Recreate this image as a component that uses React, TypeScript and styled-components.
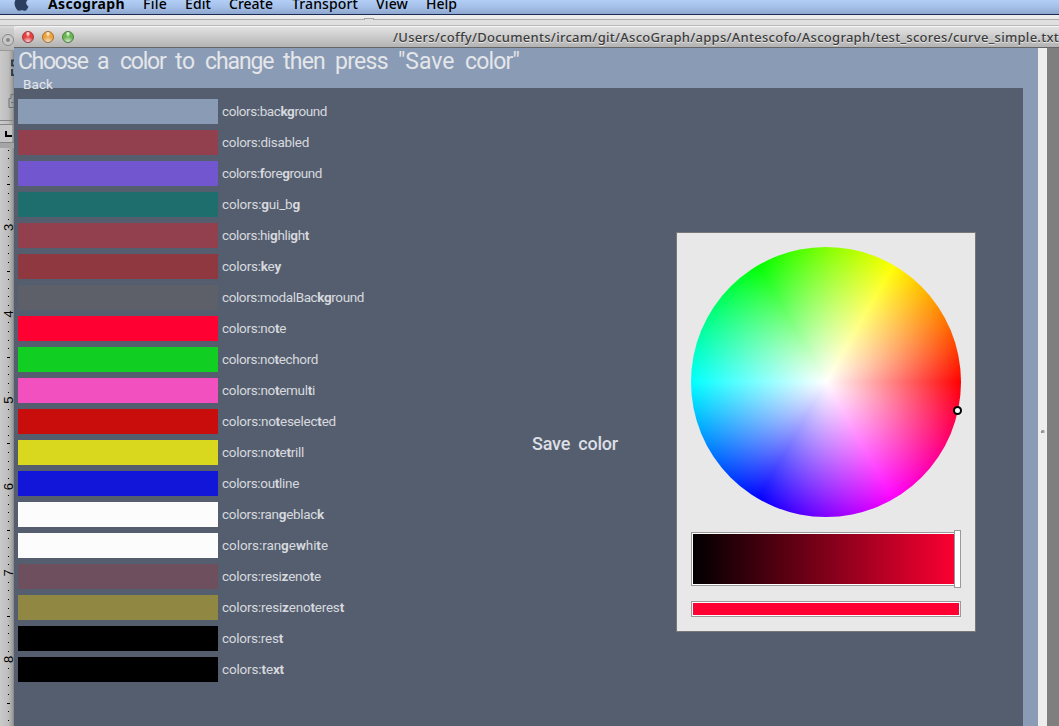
import React, { useLayoutEffect, useRef, useState } from "react";
import styled, { createGlobalStyle } from "styled-components";
import { FaApple } from "react-icons/fa";

const GlobalStyle = createGlobalStyle`
  * { box-sizing: border-box; }
  html, body { margin: 0; padding: 0; overflow: hidden; }
`;

const Desktop = styled.div`
  width: 1059px;
  height: 726px;
  overflow: hidden;
  display: flex;
  flex-direction: column;
  background: #e4e4e4;
  font-family: "Noto Sans", sans-serif;
`;

const MenuBar = styled.nav`
  flex: none;
  height: 15px;
  position: relative;
  display: flex;
  align-items: flex-start;
  padding-left: 13px;
  background: linear-gradient(#b4cff6, #a3bee7 55%, #8fa9d0 95%);
  border-bottom: 1px solid #1b2a55;
  color: #000;
  overflow: hidden;
`;

const AppleMark = styled(FaApple)`
  flex: none;
  width: 17px;
  height: 19px;
  margin-top: -7px;
  color: #2c3f60;
`;

const MenuItem = styled.div<{ $slot: number; $bold?: boolean }>`
  flex: none;
  width: ${(p) => p.$slot}px;
  margin-top: -6px;
  font-size: 14px;
  line-height: 20px;
  font-weight: ${(p) => (p.$bold ? 700 : 500)};
`;

const Backdrop = styled.div`
  flex: none;
  height: 11px;
  border-top: 3px solid #ececec;
  background: linear-gradient(#e9e6e9 0 1px, #b0adb0 1px 2px, #e0e0e0 2px 7px, #b8b8b8 7px);
  padding-left: 364px;
`;

const FolderEdge = styled.div`
  width: 10px;
  height: 2px;
  border: 1px solid #a4a4a4;
  border-bottom: 0;
  background: #ddd;
`;

const Main = styled.div`
  flex: 1;
  display: flex;
  min-height: 0;
`;

const RearWindow = styled.aside`
  flex: none;
  width: 14px;
  overflow: hidden;
  display: flex;
  flex-direction: column;
  background: linear-gradient(90deg, #cacaca, #bdbdbd 60%, #9b9b9b 92%, #7f7f7f);
`;

const RearTitle = styled.div`
  height: 25px;
  border-top: 2px solid #d8d8d8;
  border-bottom: 1px solid #999;
  background: linear-gradient(#cfcfcf, #b4b4b4);
`;

const Window = styled.section`
  flex: 1;
  display: flex;
  flex-direction: column;
  min-width: 0;
`;

const TitleBar = styled.header`
  flex: none;
  height: 22px;
  display: flex;
  align-items: center;
  padding-left: 8px;
  border-top: 1px solid #f6f6f6;
  border-bottom: 1px solid #666;
  border-top-left-radius: 5px;
  background: linear-gradient(#e2e2e2, #b3b3b3);
  color: #3c3c3c;
  white-space: nowrap;
`;

const Light = styled.i<{ $tone: string; $edge: string }>`
  flex: none;
  width: 12px;
  height: 12px;
  margin-right: 8px;
  border-radius: 50%;
  border: 1px solid ${(p) => p.$edge};
  background:
    radial-gradient(ellipse at 50% 15%, #ffffffcc 0 8%, transparent 32%),
    radial-gradient(circle at 50% 100%, #ffffff99, ${(p) => p.$tone} 50%);
`;

const WindowPath = styled.div`
  margin-left: 311px;
  font-size: 13px;
  line-height: 20px;
  font-weight: 500;
  text-shadow: 0 1px 0 #e8e8e8;
`;

const WindowBody = styled.div`
  flex: 1;
  display: flex;
  min-height: 0;
`;

const Canvas = styled.main`
  width: 1024px;
  display: flex;
  flex-direction: column;
  background: #8a9bb5;
  color: #e4e6ea;
  font-family: Roboto, sans-serif;
`;

const Heading = styled.div`
  flex: none;
  height: 40px;
  position: relative;
  z-index: 1;
  padding-left: 4px;
`;

const Prompt = styled.h1`
  display: flex;
  margin: 0;
  height: 28px;
  font-size: 23px;
  line-height: 28px;
  font-weight: 400;
  word-spacing: 5px;
`;

const BackButton = styled.div`
  padding-left: 5px;
  font-size: 13.5px;
  line-height: 16px;
  font-weight: 400;
`;

const Workspace = styled.div`
  flex: 1;
  width: 1009px;
  display: flex;
  background: #555e6f;
`;

const ColorList = styled.div`
  width: 518px;
  padding: 11px 0 0 4px;
  display: flex;
  flex-direction: column;
  gap: 6px;
`;

const ColorRow = styled.div`
  display: flex;
  align-items: center;
  gap: 4px;
  height: 25px;
`;

const Swatch = styled.div<{ $fill: string }>`
  width: 200px;
  height: 25px;
  background: ${(p) => p.$fill};
`;

const ColorName = styled.div`
  font-size: 13.5px;
  line-height: 25px;
  font-weight: 400;
  color: #d6d9de;
`;

const Heavy = styled.span`
  font-weight: 700;
`;

const SaveButton = styled.div`
  width: 144px;
  padding-top: 344px;
  font-size: 18px;
  line-height: 24px;
  font-weight: 500;
  color: #dcdfe4;
  word-spacing: 4px;
`;

const Picker = styled.div`
  width: 300px;
  height: 400px;
  margin-top: 144px;
  padding: 14px 14px 0;
  border: 1px solid #777;
  background: #e8e8e8;
`;

const Wheel = styled.div`
  position: relative;
  width: 270px;
  height: 270px;
  border-radius: 50%;
  background:
    radial-gradient(circle closest-side, #fff, #fff0),
    conic-gradient(from 90deg, #f00, #f0f, #00f, #0ff, #0f0, #ff0, #f00);
`;

const WheelMarker = styled.div`
  position: absolute;
  left: 262px;
  top: 159px;
  width: 9px;
  height: 9px;
  border: 2px solid #000;
  border-radius: 50%;
  background: #fff;
`;

const ValueTrack = styled.div`
  position: relative;
  height: 54px;
  margin-top: 15px;
  border: 1px solid #999;
  padding: 1px;
  background: linear-gradient(90deg, #000, #ff0033) content-box, #fff;
`;

const ValueHandle = styled.div`
  position: absolute;
  right: -1px;
  top: -3px;
  width: 7px;
  height: 58px;
  border: 1px solid #999;
  background: #fff;
`;

const Result = styled.div`
  height: 16px;
  margin-top: 15px;
  border: 1px solid #999;
  padding: 1px;
  background: linear-gradient(#ff0033, #ff0033) content-box, #fff;
`;

const ScrollGutter = styled.div`
  width: 9px;
  background: #ededed;
  display: flex;
  justify-content: center;
  padding-top: 382px;
`;

const Grip = styled.i`
  width: 4px;
  height: 3px;
  border-radius: 3px 3px 0 0;
  background: linear-gradient(120deg, #666, #ccc);
`;

const Outside = styled.div`
  flex: 1;
  background: #7f7f7f;
`;

const FitSpan = styled.span`
  display: inline-block;
  white-space: pre;
`;

/* Tracks its text so that it spans the given width. */
function Fit({ width, children }: { width: number; children: React.ReactNode }) {
  const ref = useRef<HTMLSpanElement>(null);
  const [tracking, setTracking] = useState(0);
  useLayoutEffect(() => {
    const el = ref.current;
    if (!el) return;
    const count = (el.textContent || "").length;
    setTracking((width - el.getBoundingClientRect().width) / count);
  }, [width]);
  return (
    <FitSpan ref={ref} style={{ letterSpacing: tracking }}>
      {children}
    </FitSpan>
  );
}

const menus = [
  { text: "Ascograph", width: 77, slot: 95, bold: true },
  { text: "File", width: 24, slot: 42 },
  { text: "Edit", width: 26, slot: 44 },
  { text: "Create", width: 44, slot: 63 },
  { text: "Transport", width: 66, slot: 84 },
  { text: "View", width: 32, slot: 50 },
  { text: "Help", width: 31, slot: 60 },
];

const promptWords: [string, number][] = [
  ["Choose ", 79],
  ["a ", 23],
  ["color ", 55],
  ["to ", 30],
  ["change ", 78],
  ["then ", 52],
  ["press ", 63],
  ['"Save ', 67],
  ['color"', 54],
];

const colors: [string, string, number][] = [
  ["background", "#8a9bb5", 105],
  ["disabled", "#923f4e", 87],
  ["foreground", "#7256d0", 100],
  ["gui_bg", "#1f6e6e", 78],
  ["highlight", "#923f4e", 87],
  ["key", "#8f3840", 59],
  ["modalBackground", "#5d6068", 142],
  ["note", "#ff0033", 64],
  ["notechord", "#11ce22", 96],
  ["notemulti", "#f150be", 93],
  ["noteselected", "#c90d0d", 114],
  ["notetrill", "#dad71f", 82],
  ["outline", "#1216d8", 77],
  ["rangeblack", "#fcfcfc", 102],
  ["rangewhite", "#fcfcfc", 106],
  ["resizenote", "#6d4f5d", 99],
  ["resizenoterest", "#908743", 122],
  ["rest", "#000000", 61],
  ["text", "#000000", 62],
];

function Ruler() {
  const dots = Array.from({ length: 68 }, (_, i) => ({ i, y: 100.6 + i * 8.64 }));
  return (
    <svg width="14" height="675" viewBox="0 0 14 675">
      <g fill="none" stroke="#30404d">
        <path d="M14 9.500h-2v5h2M12 18v6h2" strokeWidth="2" />
        <path d="M14 43.500h-3v4h-2v9h5M11 51.500h3" stroke="#6b7378" />
      </g>
      <path d="M0 69.500H14M0 73.500H14M0 91.500H14" stroke="#858585" />
      <rect y="74" width="12" height="17" fill="#c5c5c5" />
      <rect y="92" width="14" height="5" fill="#a5a5a5" />
      <path d="M6 80v5h6" stroke="#000" strokeWidth="2" fill="none" />
      {dots.map(({ i, y }) =>
        i % 10 === 9 ? null : (
          <rect
            key={i}
            x={i % 10 === 4 ? 7 : 8}
            y={Math.round(y - 2)}
            width={i % 10 === 4 ? 3 : 1}
            height="1"
            fill="#000"
          />
        )
      )}
      {[3, 4, 5, 6, 7, 8].map((n, i) => (
        <text
          key={n}
          transform={`translate(13 ${180 + i * 86.4}) rotate(-90)`}
          fontFamily="Liberation Sans, sans-serif"
          fontSize="13"
        >
          {n}
        </text>
      ))}
    </svg>
  );
}

export default function App() {
  return (
    <Desktop>
      <GlobalStyle />
      <MenuBar>
        <AppleMark />
        <MenuItem $slot={18} />
        {menus.map((m) => (
          <MenuItem key={m.text} $slot={m.slot} $bold={m.bold}>
            <Fit width={m.width}>{m.text}</Fit>
          </MenuItem>
        ))}
      </MenuBar>
      <Backdrop>
        <FolderEdge />
      </Backdrop>
      <Main>
        <RearWindow>
          <RearTitle>
            <svg width="14" height="22" viewBox="0 0 14 22">
              <circle cx="8" cy="12" r="5.5" fill="#c8c8c8" stroke="#888" />
              <circle cx="8" cy="12" r="2" fill="#888" />
            </svg>
          </RearTitle>
          <Ruler />
        </RearWindow>
        <Window>
          <TitleBar>
            <Light $tone="#e8403f" $edge="#a3383a" />
            <Light $tone="#eda23a" $edge="#a87028" />
            <Light $tone="#67b64f" $edge="#4b7f3a" />
            <WindowPath>
              <Fit width={666}>
                /Users/coffy/Documents/ircam/git/AscoGraph/apps/Antescofo/Ascograph/test_scores/curve_simple.txt
              </Fit>
            </WindowPath>
          </TitleBar>
          <WindowBody>
            <Canvas>
              <Heading>
                <Prompt>
                  {promptWords.map(([word, width]) => (
                    <Fit key={word} width={width}>
                      {word}
                    </Fit>
                  ))}
                </Prompt>
                <BackButton>
                  <Fit width={30}>Back</Fit>
                </BackButton>
              </Heading>
              <Workspace>
                <ColorList>
                  {colors.map(([name, fill, width]) => (
                    <ColorRow key={name}>
                      <Swatch $fill={fill} />
                      <ColorName>
                        <Fit width={width}>
                          {`colors:${name}`
                            .split(/([gtkzxyfw]+)/)
                            .map((part, i) => (i % 2 ? <Heavy key={i}>{part}</Heavy> : part))}
                        </Fit>
                      </ColorName>
                    </ColorRow>
                  ))}
                </ColorList>
                <SaveButton>
                  <Fit width={86}>Save color</Fit>
                </SaveButton>
                <Picker>
                  <Wheel>
                    <WheelMarker />
                  </Wheel>
                  <ValueTrack>
                    <ValueHandle />
                  </ValueTrack>
                  <Result />
                </Picker>
              </Workspace>
            </Canvas>
            <ScrollGutter>
              <Grip />
            </ScrollGutter>
            <Outside />
          </WindowBody>
        </Window>
      </Main>
    </Desktop>
  );
}
